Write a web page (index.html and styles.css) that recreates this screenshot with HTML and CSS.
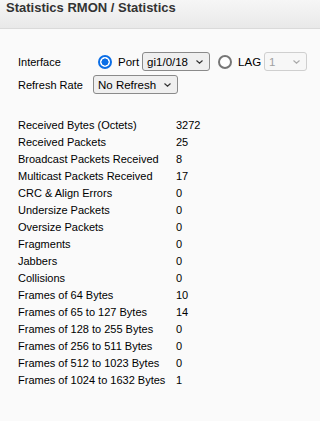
FILE: index.html
```html
<!DOCTYPE html>
<html lang="en">

<head>
    <meta charset="UTF-8">
    <meta name="viewport" content="width=device-width, initial-scale=1.0">
    <title>Statistics RMON / Statistics</title>
    <link rel="stylesheet" href="styles.css">
</head>

<body>
    <div id="page-title">Statistics RMON / Statistics</div>

    <div id="content">
        <div class="form-row">
            <span class="form-label">Interface</span>
            <span class="radio checked"></span>
            <span class="radio-text">Port</span>
            <span class="select sel-port">
                <span>gi1/0/18</span>
                <svg width="7" height="4" viewBox="0 0 7 4"><path d="M0.5 0.5 L3.5 3.2 L6.5 0.5" fill="none" stroke="#333" stroke-width="1.2"/></svg>
            </span>
            <span class="radio lag"></span>
            <span class="radio-text">LAG</span>
            <span class="select sel-lag disabled">
                <span>1</span>
                <svg width="7" height="4" viewBox="0 0 7 4"><path d="M0.5 0.5 L3.5 3.2 L6.5 0.5" fill="none" stroke="#aaa" stroke-width="1.2"/></svg>
            </span>
        </div>
        <div class="form-row">
            <span class="form-label short">Refresh Rate</span>
            <span class="select sel-refresh">
                <span>No Refresh</span>
                <svg width="7" height="4" viewBox="0 0 7 4"><path d="M0.5 0.5 L3.5 3.2 L6.5 0.5" fill="none" stroke="#333" stroke-width="1.2"/></svg>
            </span>
        </div>

        <div id="stats">
            <div>Received Bytes (Octets)</div><div>3272</div>
            <div>Received Packets</div><div>25</div>
            <div>Broadcast Packets Received</div><div>8</div>
            <div>Multicast Packets Received</div><div>17</div>
            <div>CRC &amp; Align Errors</div><div>0</div>
            <div>Undersize Packets</div><div>0</div>
            <div>Oversize Packets</div><div>0</div>
            <div>Fragments</div><div>0</div>
            <div>Jabbers</div><div>0</div>
            <div>Collisions</div><div>0</div>
            <div>Frames of 64 Bytes</div><div>10</div>
            <div>Frames of 65 to 127 Bytes</div><div>14</div>
            <div>Frames of 128 to 255 Bytes</div><div>0</div>
            <div>Frames of 256 to 511 Bytes</div><div>0</div>
            <div>Frames of 512 to 1023 Bytes</div><div>0</div>
            <div>Frames of 1024 to 1632 Bytes</div><div>1</div>
        </div>
    </div>
</body>

</html>
```

FILE: styles.css
```css
body {
    font-family: "Liberation Sans", Arial, sans-serif;
    font-size: 11px;
    color: #000;
    background-color: #fafafa;
    margin: 0;
}

#page-title {
    height: 28px;
    line-height: 16px;
    padding-left: 6px;
    font-size: 13px;
    font-weight: bold;
    color: #333;
    background: linear-gradient(#f6f6f6, #e9e9e9);
    border-bottom: 1px solid #dadada;
}

#content {
    padding: 23px 0 0 18px;
}

.form-row {
    display: flex;
    align-items: center;
    height: 19px;
    margin-bottom: 4px;
}

.form-label {
    width: 80px;
}

.form-label.short {
    width: 75px;
}

.radio {
    box-sizing: border-box;
    width: 14px;
    height: 14px;
    border: 2px solid #767676;
    border-radius: 50%;
    background-color: #fff;
}

.radio.checked {
    border-color: #0b6ee6;
    background: radial-gradient(circle, #0b6ee6 0 3.3px, #fff 3.8px);
}

.radio.lag {
    margin-left: 8px;
}

.radio-text {
    margin: 0 3px 0 6px;
    font-size: 11.5px;
}

.select {
    box-sizing: border-box;
    display: flex;
    align-items: center;
    justify-content: space-between;
    height: 19px;
    padding: 0 6px 0 4px;
    font-size: 11.5px;
    background-color: #efefef;
    border: 1px solid #8a8a8a;
    border-radius: 3px;
}

.select.disabled {
    color: #a0a0a0;
    background-color: #f7f7f7;
    border-color: #cfcfcf;
}

.sel-port {
    width: 68px;
}

.sel-lag {
    width: 43px;
}

.sel-refresh {
    width: 85px;
}

#stats {
    display: grid;
    grid-template-columns: 158px auto;
    line-height: 17px;
    margin-top: 23px;
}
```
